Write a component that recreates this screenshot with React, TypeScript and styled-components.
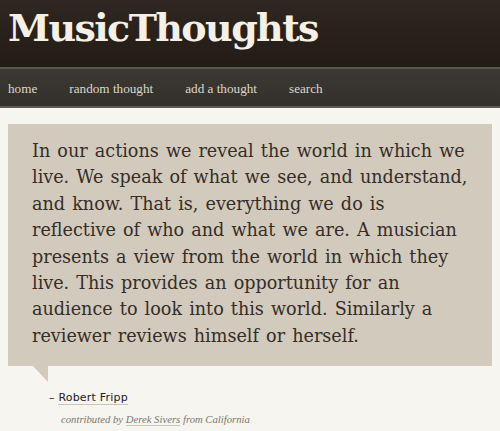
import React from "react";
import styled, { createGlobalStyle } from "styled-components";

const Global = createGlobalStyle`
  html, body { margin: 0; padding: 0; }
  body { background: #f6f5ef; font-family: "DejaVu Serif", serif; }
`;

const Page = styled.div`
  width: 500px;
  min-height: 431px;
  background: #f6f5ef;
  overflow: hidden;
`;

const Header = styled.header`
  height: 67px;
  background: linear-gradient(#2f2721, #221b16);
  display: flex;
  align-items: flex-start;
  padding-left: 8px;
  box-sizing: border-box;
`;

const Title = styled.h1`
  margin: 0;
  padding-top: 6px;
  font-family: "DejaVu Serif", serif;
  font-weight: bold;
  font-size: 38px;
  line-height: 44px;
  color: #f4f0e6;
  letter-spacing: -1.6px;
`;

const Nav = styled.nav`
  height: 41px;
  box-sizing: border-box;
  border-top: 2px solid #57574a;
  border-bottom: 2px solid #5f5a4f;
  background: linear-gradient(#3c3933, #33302b);
  display: flex;
  align-items: center;
  gap: 32px;
  padding: 2px 0 0 8px;
`;

const NavLink = styled.a`
  font-family: "Liberation Serif", serif;
  font-size: 13.2px;
  color: #dcd7cb;
  text-decoration: none;
`;

const Main = styled.main`
  padding: 16px 8px 0;
`;

const Quote = styled.blockquote`
  position: relative;
  margin: 0;
  background: #d2cabd;
  padding: 14px 24px 17px;
  font-family: "DejaVu Serif", serif;
  font-size: 17.6px;
  line-height: 26.4px;
  word-spacing: 1.5px;
  white-space: nowrap;
  color: #352e27;

  &::after {
    content: "";
    position: absolute;
    left: 25px;
    bottom: -16px;
    width: 0;
    height: 0;
    border-top: 16px solid #d2cabd;
    border-left: 15px solid transparent;
  }
`;

const Attribution = styled.div`
  padding: 25px 0 0 41px;
`;

const Author = styled.div`
  font-family: "DejaVu Sans", sans-serif;
  font-size: 11px;
  letter-spacing: 0.2px;
  color: #24211d;
  line-height: 14px;
`;

const AuthorLink = styled.a`
  color: #24211d;
  text-decoration: none;
  border-bottom: 1px solid #c9c5ba;
`;

const Contributed = styled.div`
  margin: 6px 0 0 12px;
  font-family: "Liberation Serif", serif;
  font-style: italic;
  font-size: 10.7px;
  color: #7d786e;
  line-height: 16px;
`;

const ContribLink = styled.a`
  color: #7d786e;
  text-decoration: none;
  border-bottom: 1px solid #c9c5ba;
`;

const lines = [
  "In our actions we reveal the world in which we",
  "live. We speak of what we see, and understand,",
  "and know. That is, everything we do is",
  "reflective of who and what we are. A musician",
  "presents a view from the world in which they",
  "live. This provides an opportunity for an",
  "audience to look into this world. Similarly a",
  "reviewer reviews himself or herself.",
];

export default function App() {
  return (
    <Page>
      <Global />
      <Header>
        <Title>MusicThoughts</Title>
      </Header>
      <Nav>
        <NavLink>home</NavLink>
        <NavLink>random thought</NavLink>
        <NavLink>add a thought</NavLink>
        <NavLink>search</NavLink>
      </Nav>
      <Main>
        <Quote>
          {lines.map((l, i) => (
            <React.Fragment key={i}>
              {l}
              {i < lines.length - 1 && <br />}
            </React.Fragment>
          ))}
        </Quote>
        <Attribution>
          <Author>
            – <AuthorLink>Robert Fripp</AuthorLink>
          </Author>
          <Contributed>
            contributed by <ContribLink>Derek Sivers</ContribLink> from California
          </Contributed>
        </Attribution>
      </Main>
    </Page>
  );
}
